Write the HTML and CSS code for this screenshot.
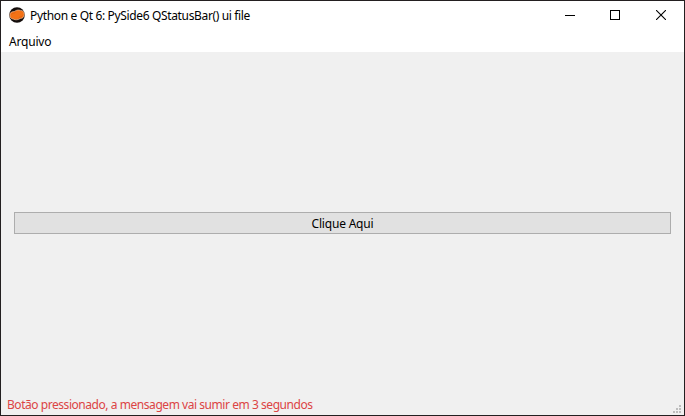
FILE: index.html
```html
<!DOCTYPE html>
<html lang="pt-BR">
<head>
<meta charset="utf-8">
<title>Python e Qt 6: PySide6 QStatusBar() ui file</title>
<link rel="stylesheet" href="styles.css">
</head>
<body>
<div class="window">
  <header class="titlebar">
    <svg class="app-icon" width="16" height="16" viewBox="0 0 16 16">
      <circle cx="8" cy="8" r="7.8" fill="#140d0b"/>
      <path d="M.8 8C1 5.200 3 4.500 5.200 4.600 7 3 9.500 2.600 11.500 3.400 14 3.400 15.300 5 15.300 7.500 15.200 10 13.500 11.600 11.300 11.500 9 13 6.500 13.200 4.500 12.200 2 12 .8 10.500.8 8Z" fill="#f47216" stroke="#ecc7ad" stroke-width=".6"/>
      <path d="M2.500 7.500C4 5.500 5.500 6.500 6.500 5.200M9.500 11C10.500 9.800 12.500 10.500 13.500 8.500" fill="none" stroke="#dc5c10" stroke-width=".7"/>
    </svg>
    <h1 class="title"><span>Python e Qt 6: PySide6 QStatusBar() ui file</span></h1>
    <div class="controls">
      <svg width="10" height="10" viewBox="0 0 10 10" shape-rendering="crispEdges"><path d="M0 5.500H10" stroke="#000"/></svg>
      <svg width="10" height="10" viewBox="0 0 10 10" shape-rendering="crispEdges"><rect x=".5" y=".5" width="9" height="9" fill="none" stroke="#000"/></svg>
      <svg class="close" width="10" height="10" viewBox="0 0 10 10"><path d="M0 0 10 10M10 0 0 10" stroke="#000" stroke-width="1.100"/></svg>
    </div>
  </header>
  <nav class="menubar"><span>Arquivo</span></nav>
  <main class="content"><button class="push-button" type="button"><span>Clique Aqui</span></button></main>
  <footer class="statusbar">
    <span class="message">Botão pressionado, a mensagem vai sumir em 3 segundos</span>
    <svg class="grip" width="8" height="8" viewBox="0 0 8 8" shape-rendering="crispEdges"><path d="M6 0h2v2H6zM3 3h2v2H3zM6 3h2v2H6zM0 6h2v2H0zM3 6h2v2H3zM6 6h2v2H6z" fill="#bdbdbd"/></svg>
  </footer>
</div>
</body>
</html>
```
FILE: styles.css
```css
* { box-sizing: border-box; }
body { margin: 0; font: 12px/16px "Noto Sans", "Open Sans", sans-serif; color: #000; }
.window { width: 685px; height: 416px; display: flex; flex-direction: column; background: #f0f0f0; border: 1px solid #231f20; }
.titlebar { height: 30px; flex: none; display: flex; align-items: center; background: #fff; padding: 0 18px 0 8px; }
.app-icon { flex: none; margin: -2px 5px 0 0; }
.title { margin: 0; flex: 1; font-size: 12px; font-weight: 400; white-space: nowrap; letter-spacing: -.35px; }
.controls { display: flex; gap: 35px; margin-top: -2px; }
.controls svg { display: block; }
.controls .close { margin-left: 1px; }
.menubar { height: 21px; flex: none; background: #fff; padding: 3px 8px 2px; letter-spacing: -.2px; }
.content { flex: 1; display: flex; align-items: center; padding: 0 13px 1px; }
.push-button { width: 100%; height: 22px; padding: 1px 0 0; border: 1px solid #adadad; background: #e1e1e1; font: inherit; color: inherit; line-height: 19px; letter-spacing: -.2px; }
.statusbar { height: 21px; flex: none; display: flex; justify-content: space-between; align-items: flex-end; padding: 0 3px 2px 6px; color: #dc4444; white-space: nowrap; }
.message { letter-spacing: -.45px; }
.grip { flex: none; }
```
